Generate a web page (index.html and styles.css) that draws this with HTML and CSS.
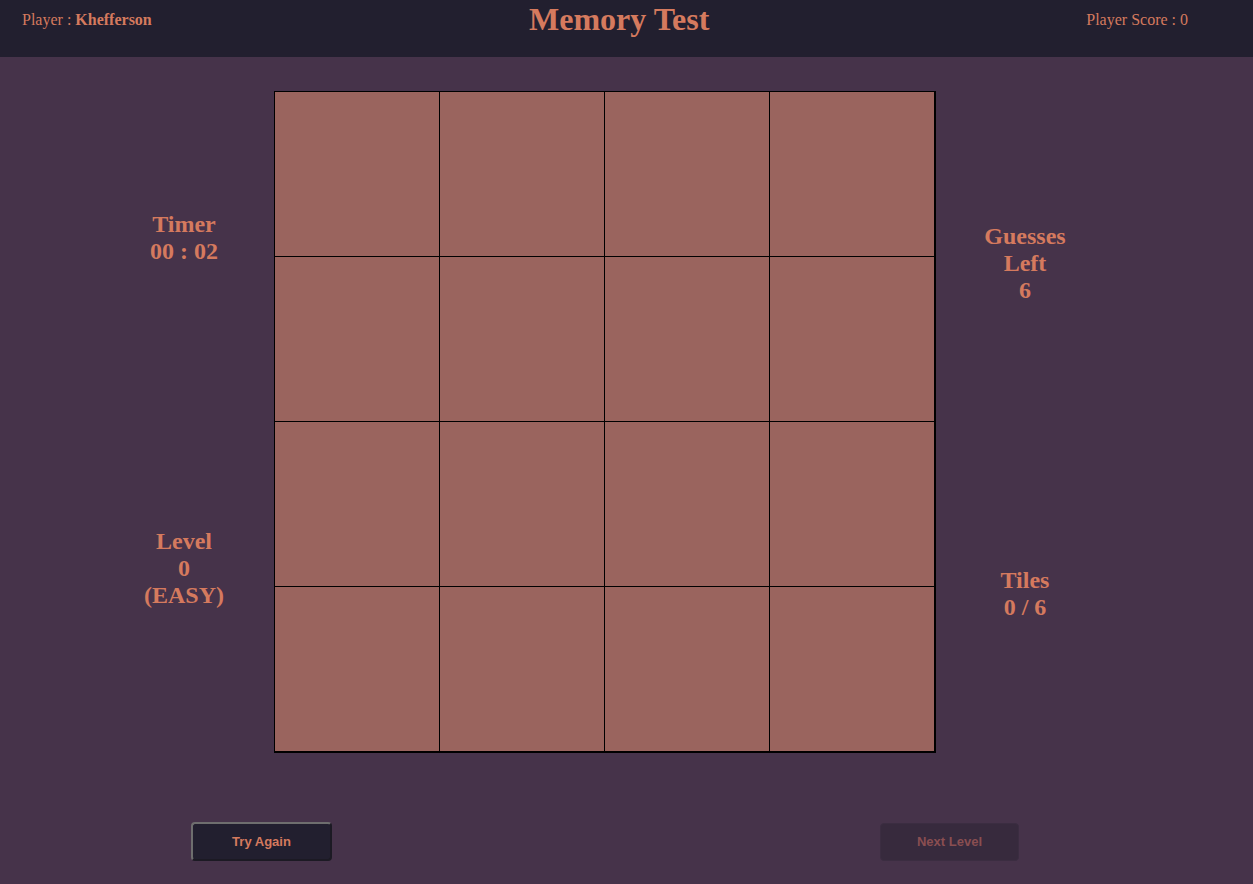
FILE: index.html
```html
<!DOCTYPE html>
<html>
<head>
<meta charset="utf-8">
<title>Memory Test</title>
<link rel="stylesheet" href="styles.css">
</head>
<body>
<header class="topbar">
  <div class="player">Player : <b>Khefferson</b></div>
  <h1 class="title">Memory Test</h1>
  <div class="score">Player Score : 0</div>
</header>
<main class="board-row">
  <div class="side side-left">
    <div class="stat">Timer<br>00 : 02</div>
    <div class="stat stat-low">Level<br>0<br>(EASY)</div>
  </div>
  <div class="grid">
    <div class="tile"></div><div class="tile"></div><div class="tile"></div><div class="tile"></div>
    <div class="tile"></div><div class="tile"></div><div class="tile"></div><div class="tile"></div>
    <div class="tile"></div><div class="tile"></div><div class="tile"></div><div class="tile"></div>
    <div class="tile"></div><div class="tile"></div><div class="tile"></div><div class="tile"></div>
  </div>
  <div class="side side-right">
    <div class="stat">Guesses<br>Left<br>6</div>
    <div class="stat stat-low">Tiles<br>0 / 6</div>
  </div>
</main>
<div class="actions">
  <button class="btn btn-try">Try Again</button>
  <button class="btn btn-next" disabled>Next Level</button>
</div>
</body>
</html>
```
FILE: styles.css
```css
html, body {
  margin: 0;
  padding: 0;
}
body {
  background: #46334a;
  color: #d57a5e;
  font-family: "Liberation Serif", "Times New Roman", serif;
  width: 1253px;
  height: 884px;
  overflow: hidden;
}
.topbar {
  height: 57px;
  background: #221f2f;
  display: flex;
  align-items: flex-start;
  padding-left: 22px;
  box-sizing: border-box;
}
.player {
  flex: 0 0 507px;
  font-size: 16px;
  line-height: 16px;
  padding-top: 12px;
}
.player b {
  font-weight: bold;
}
.title {
  margin: 0;
  font-size: 32px;
  line-height: 32px;
  font-weight: bold;
  padding-top: 3px;
}
.score {
  margin-left: auto;
  margin-right: 65px;
  font-size: 16px;
  line-height: 16px;
  padding-top: 12px;
}
.board-row {
  display: flex;
  margin-top: 34px;
  padding-left: 94px;
}
.side {
  width: 180px;
  display: flex;
  flex-direction: column;
  align-items: center;
  text-align: center;
}
.side-left {
  padding-top: 120px;
}
.side-right {
  width: 178px;
  padding-top: 132px;
}
.stat {
  font-size: 24px;
  font-weight: bold;
}
.stat-low {
  margin-top: 263px;
}
.grid {
  display: grid;
  grid-template-columns: repeat(4, 164px);
  grid-template-rows: repeat(4, 164px);
  gap: 1px;
  padding: 1px 2px 2px 1px;
  background: #000;
}
.tile {
  background: #9a645e;
}
.actions {
  display: flex;
  margin-top: 69px;
  padding-left: 191px;
  gap: 548px;
  align-items: flex-start;
}
.btn {
  width: 141px;
  height: 39px;
  box-sizing: border-box;
  font-family: "Liberation Sans", Arial, sans-serif;
  font-size: 13px;
  font-weight: bold;
  border-radius: 4px;
  padding: 0;
}
.btn-try {
  background: #221f2f;
  color: #d57a5e;
  border: 2px solid;
  border-color: #6e6e6e #1c1a24 #1c1a24 #6e6e6e;
}
.btn-next {
  margin-top: 1px;
  height: 38px;
  width: 139px;
  padding-bottom: 2px;
  background: #372a3d;
  color: #8a4e51;
  border: 1px solid #3b2d41;
}
```
